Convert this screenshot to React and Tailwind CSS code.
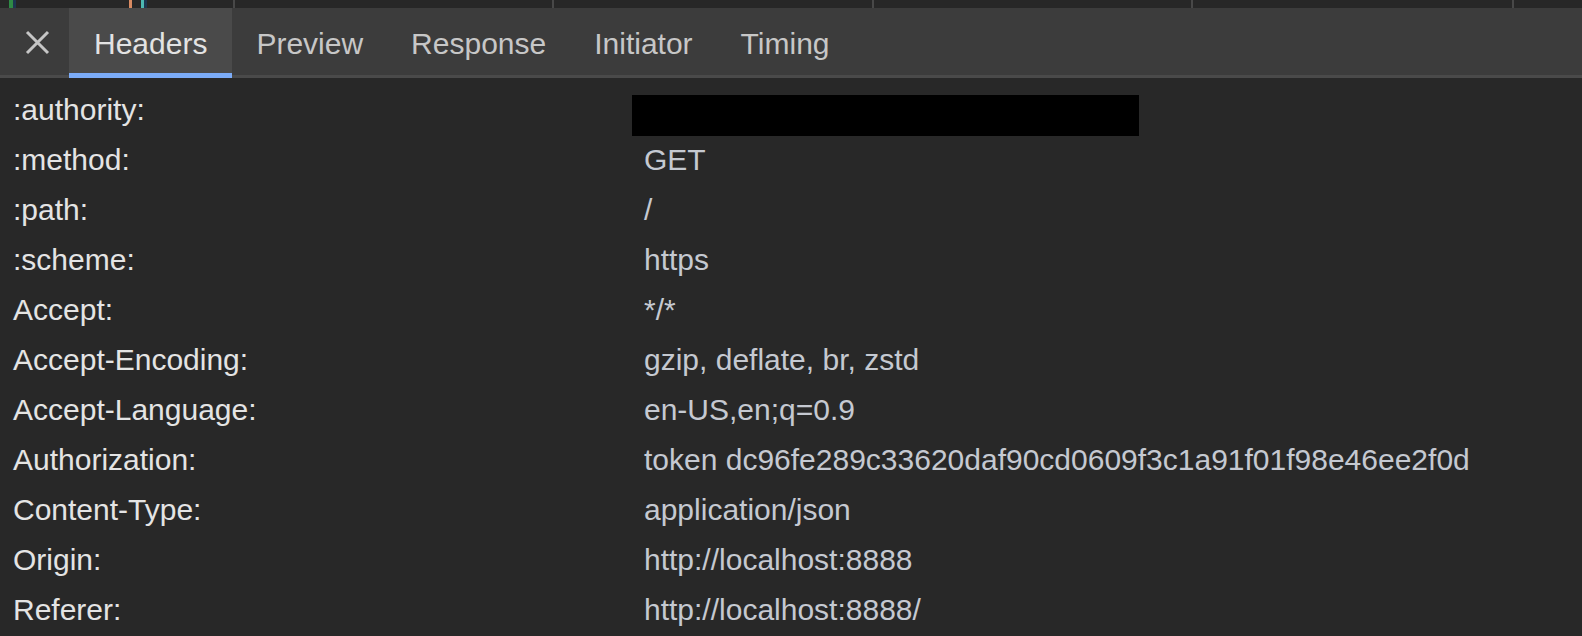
import { useState } from "react";

const TABS = ["Headers", "Preview", "Response", "Initiator", "Timing"];

const HEADERS = [
  [":authority:", null],
  [":method:", "GET"],
  [":path:", "/"],
  [":scheme:", "https"],
  ["Accept:", "*/*"],
  ["Accept-Encoding:", "gzip, deflate, br, zstd"],
  ["Accept-Language:", "en-US,en;q=0.9"],
  ["Authorization:", "token dc96fe289c33620daf90cd0609f3c1a91f01f98e46ee2f0d"],
  ["Content-Type:", "application/json"],
  ["Origin:", "http://localhost:8888"],
  ["Referer:", "http://localhost:8888/"],
];

export default function App() {
  const [active, setActive] = useState("Headers");

  return (
    <div
      className="w-[1582px] h-[636px] overflow-hidden bg-[#282828] flex flex-col"
      style={{ fontFamily: '"Liberation Sans", Arial, sans-serif' }}
    >
      {/* Waterfall strip peeking in at the top */}
      <div className="h-[8px] flex shrink-0 bg-[#272727]">
        <div className="w-[235px] h-full border-r-2 border-[#484848] flex">
          <span className="ml-[9px] w-[4px] h-full bg-[#2f8a45]" />
          <span className="w-[3px] h-full bg-[#1d3650]" />
          <span className="ml-[113px] w-[3px] h-full bg-[#d88a62]" />
          <span className="ml-[9px] w-[3px] h-full bg-[#4cb8b2]" />
          <span className="w-[3px] h-full bg-[#1d3650]" />
        </div>
        <div className="w-[319px] h-full border-r-2 border-[#484848]" />
        <div className="w-[320px] h-full border-r-2 border-[#484848]" />
        <div className="w-[319px] h-full border-r-2 border-[#484848]" />
        <div className="w-[321px] h-full border-r-2 border-[#484848]" />
        <div className="flex-1 h-full" />
      </div>

      {/* Tab bar */}
      <div className="h-[70px] shrink-0 flex bg-[#3c3c3c] border-b-[3px] border-[#4a4a4a]">
        <button className="w-[69px] h-full flex items-center justify-center text-[#c6c6c6]">
          <svg width="25" height="25" viewBox="0 0 25 25" className="ml-[5px] mt-[2px]">
            <path d="M2 2 L23 23 M23 2 L2 23" stroke="currentColor" strokeWidth="3" />
          </svg>
        </button>
        {TABS.map((t) => {
          const on = t === active;
          return (
            <button
              key={t}
              onClick={() => setActive(t)}
              className={
                on
                  ? "relative h-full px-[25px] pt-[3px] text-[30px] bg-[#4a4a4a] text-[#e3e3e3] flex items-center"
                  : "relative h-full px-[24px] pt-[3px] text-[30px] text-[#c7c7c7] flex items-center"
              }
            >
              {t}
              {on && (
                <span className="absolute left-0 right-0 bottom-[-3px] h-[5px] bg-[#7cacf8]" />
              )}
            </button>
          );
        })}
      </div>

      {/* Request headers */}
      <div className="pt-[6px] flex flex-col">
        {HEADERS.map(([k, v]) => (
          <div key={k} className="h-[50px] grid grid-cols-[631px_1fr] pl-[13px] items-center text-[30px] whitespace-nowrap">
            <span className="text-[#e4e4e4]">{k}</span>
            <span className="relative text-[#c5c9d1]">
              {v === null ? (
                <span className="absolute left-[-12px] top-[-14px] w-[507px] h-[41px] bg-black" />
              ) : (
                v
              )}
            </span>
          </div>
        ))}
      </div>
    </div>
  );
}
